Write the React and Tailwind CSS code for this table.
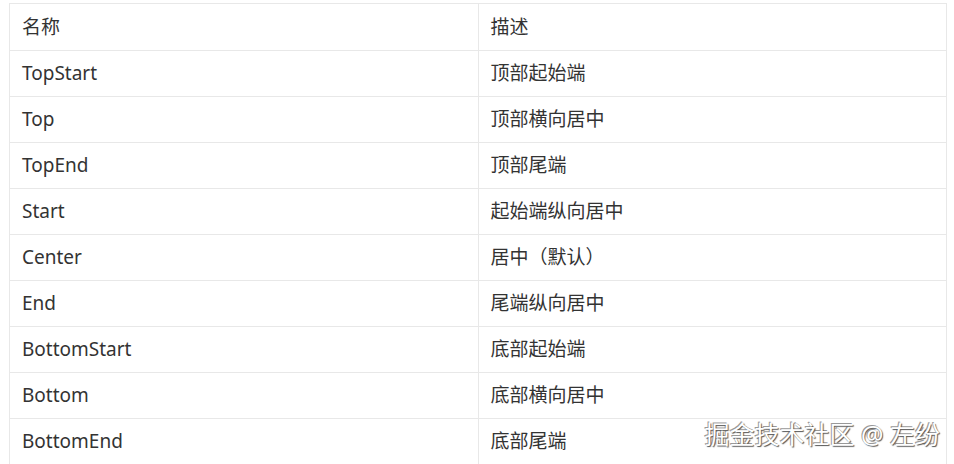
const rows = [
  ['TopStart', '顶部起始端'],
  ['Top', '顶部横向居中'],
  ['TopEnd', '顶部尾端'],
  ['Start', '起始端纵向居中'],
  ['Center', '居中（默认）'],
  ['End', '尾端纵向居中'],
  ['BottomStart', '底部起始端'],
  ['Bottom', '底部横向居中'],
  ['BottomEnd', '底部尾端'],
];

const font = { fontFamily: '"Noto Sans", "Noto Sans CJK SC", sans-serif' };

export default function App() {
  return (
    <div className="relative w-[954px] h-[464px] overflow-hidden bg-white pl-[9px] pt-[3px]" style={font}>
      <div className="w-[938px] border-t border-l border-[#e8e8e8] text-[19px] text-[#333]">
        <div className="grid grid-cols-2 h-[47px] border-b border-[#e8e8e8]">
          <div className="flex items-center pl-[12px] border-r border-[#e8e8e8]">名称</div>
          <div className="flex items-center pl-[12px] border-r border-[#e8e8e8]">描述</div>
        </div>
        {rows.map(([name, desc]) => (
          <div key={name} className="grid grid-cols-2 h-[46px] border-b border-[#e8e8e8]">
            <div className="flex items-center pl-[12px] border-r border-[#e8e8e8]">{name}</div>
            <div className="flex items-center pl-[12px] border-r border-[#e8e8e8]">{desc}</div>
          </div>
        ))}
      </div>
      <div className="absolute right-[14px] bottom-[17px] text-[25px] leading-none text-white [text-shadow:1px_1px_1px_#555,-1px_-1px_0_#999]">
        掘金技术社区 @ 左纷
      </div>
    </div>
  );
}
